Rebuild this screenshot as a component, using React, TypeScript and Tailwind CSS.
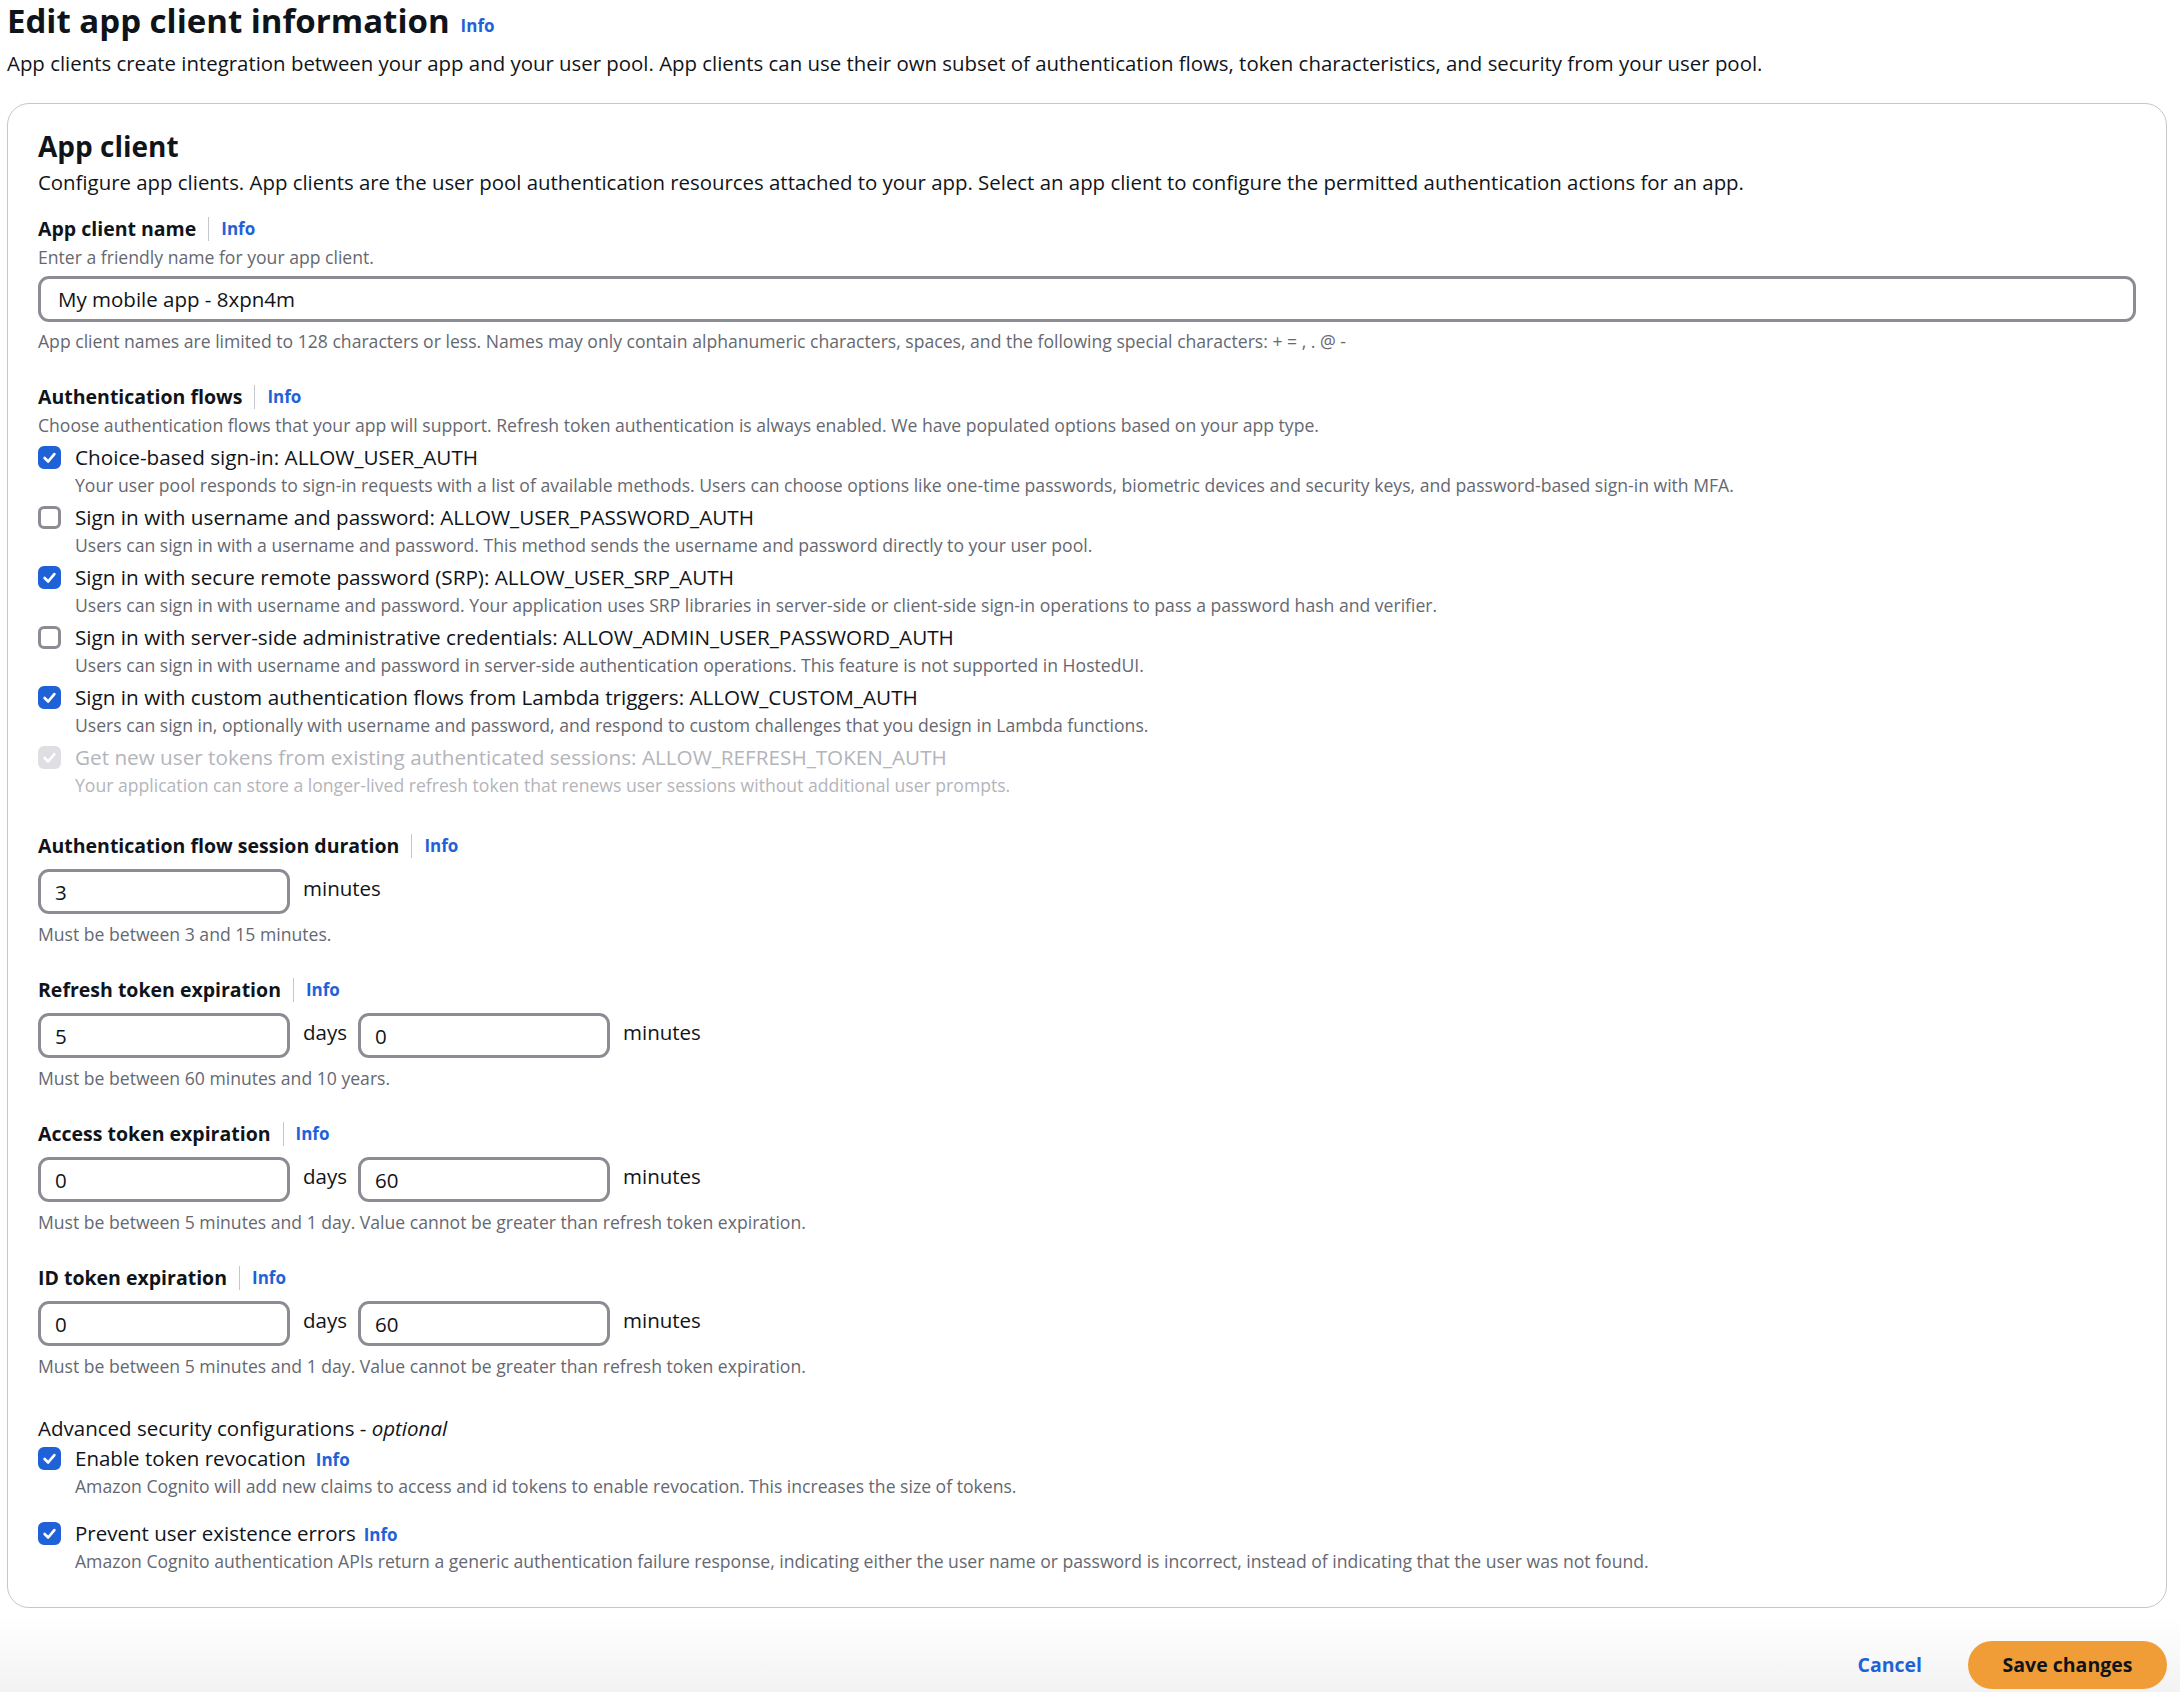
import React from "react";

const font = { fontFamily: '"Open Sans", "Liberation Sans", Arial, sans-serif' };

const InfoLink = ({ divider = true }: { divider?: boolean }) => (
  <span className="inline-flex items-center">
    {divider && <span className="mx-[12px] inline-block h-[24px] w-px bg-[#c6c6cd]" />}
    <span className="text-[17px] font-bold text-[#1f62d8]">Info</span>
  </span>
);

const Check = ({ checked, disabled }: { checked: boolean; disabled?: boolean }) => {
  const box = disabled
    ? "bg-[#dedee3] border-[#dedee3]"
    : checked
      ? "bg-[#1f62d8] border-[#1f62d8]"
      : "bg-white border-[#8c8c94]";
  return (
    <span
      className={`mt-[3px] flex h-[23px] w-[23px] shrink-0 items-center justify-center rounded-[6px] border-[3px] ${box}`}
    >
      {checked && (
        <svg viewBox="0 0 14 14" className="h-[17px] w-[17px]" fill="none">
          <path d="M3 7.4 L5.9 10.3 L11 4.2" stroke="white" strokeWidth="2.2" strokeLinecap="round" strokeLinejoin="round" />
        </svg>
      )}
    </span>
  );
};

type Flow = { label: string; desc: string; checked: boolean; disabled?: boolean };

const flows: Flow[] = [
  {
    label: "Choice-based sign-in: ALLOW_USER_AUTH",
    desc: "Your user pool responds to sign-in requests with a list of available methods. Users can choose options like one-time passwords, biometric devices and security keys, and password-based sign-in with MFA.",
    checked: true,
  },
  {
    label: "Sign in with username and password: ALLOW_USER_PASSWORD_AUTH",
    desc: "Users can sign in with a username and password. This method sends the username and password directly to your user pool.",
    checked: false,
  },
  {
    label: "Sign in with secure remote password (SRP): ALLOW_USER_SRP_AUTH",
    desc: "Users can sign in with username and password. Your application uses SRP libraries in server-side or client-side sign-in operations to pass a password hash and verifier.",
    checked: true,
  },
  {
    label: "Sign in with server-side administrative credentials: ALLOW_ADMIN_USER_PASSWORD_AUTH",
    desc: "Users can sign in with username and password in server-side authentication operations. This feature is not supported in HostedUI.",
    checked: false,
  },
  {
    label: "Sign in with custom authentication flows from Lambda triggers: ALLOW_CUSTOM_AUTH",
    desc: "Users can sign in, optionally with username and password, and respond to custom challenges that you design in Lambda functions.",
    checked: true,
  },
  {
    label: "Get new user tokens from existing authenticated sessions: ALLOW_REFRESH_TOKEN_AUTH",
    desc: "Your application can store a longer-lived refresh token that renews user sessions without additional user prompts.",
    checked: true,
    disabled: true,
  },
];

const FieldLabel = ({ children }: { children: React.ReactNode }) => (
  <div className="flex h-[28px] items-center">
    <span className="text-[19.5px] font-bold text-[#0f141a]">{children}</span>
    <InfoLink />
  </div>
);

const Hint = ({ children, className = "" }: { children: React.ReactNode; className?: string }) => (
  <div className={`text-[17.6px] leading-[22px] text-[#656871] ${className}`}>{children}</div>
);

const NumInput = ({ value }: { value: string }) => (
  <input
    defaultValue={value}
    className="h-[45px] w-[252px] rounded-[11px] border-[3px] border-[#8c8c94] bg-white px-[14px] text-[20.5px] text-[#0f141a] outline-none"
  />
);

const Unit = ({ children }: { children: React.ReactNode }) => (
  <span className="ml-[13px] mr-[11px] pt-[5px] text-[20.5px] leading-[28px] text-[#0f141a]">{children}</span>
);

const Expiration = ({
  label,
  days,
  minutes,
  hint,
  className = "",
}: {
  label: string;
  days?: string;
  minutes: string;
  hint: string;
  className?: string;
}) => (
  <div className={className}>
    <FieldLabel>{label}</FieldLabel>
    <div className="mt-[9px] flex items-start">
      {days !== undefined ? (
        <>
          <NumInput value={days} />
          <Unit>days</Unit>
          <NumInput value={minutes} />
          <Unit>minutes</Unit>
        </>
      ) : (
        <>
          <NumInput value={minutes} />
          <Unit>minutes</Unit>
        </>
      )}
    </div>
    <Hint className="mt-[9px]">{hint}</Hint>
  </div>
);

export default function App() {
  return (
    <div style={font} className="min-h-[1692px] w-full bg-white text-[#0f141a]">
      <div className="pl-[7px]">
        <div className="flex h-[42px] items-end">
          <h1 className="text-[33px] font-bold leading-[42px]">Edit app client information</h1>
          <span className="mb-[4px] ml-[11px] text-[17px] font-bold text-[#1f62d8]">Info</span>
        </div>
        <p className="mt-[7px] text-[20.4px] leading-[28px]">
          App clients create integration between your app and your user pool. App clients can use their own subset of
          authentication flows, token characteristics, and security from your user pool.
        </p>
      </div>

      <div className="ml-[7px] mr-[13px] mt-[26px] rounded-[22px] border border-[#c6c6cd] px-[30px] pb-[35px] pt-[25px]">
        <h2 className="text-[28px] font-bold leading-[34px]">App client</h2>
        <p className="mt-[5px] text-[20.4px] leading-[28px]">
          Configure app clients. App clients are the user pool authentication resources attached to your app. Select an
          app client to configure the permitted authentication actions for an app.
        </p>

        <div className="mt-[19px]">
          <FieldLabel>App client name</FieldLabel>
          <Hint className="mt-[3px]">Enter a friendly name for your app client.</Hint>
          <input
            defaultValue="My mobile app - 8xpn4m"
            className="mt-[8px] h-[46px] w-full rounded-[11px] border-[3px] border-[#8c8c94] bg-white px-[17px] text-[20.5px] text-[#0f141a] outline-none"
          />
          <Hint className="mt-[8px]">
            App client names are limited to 128 characters or less. Names may only contain alphanumeric characters,
            spaces, and the following special characters: + = , . @ -
          </Hint>
        </div>

        <div className="mt-[31px]">
          <FieldLabel>Authentication flows</FieldLabel>
          <Hint className="mt-[3px]">
            Choose authentication flows that your app will support. Refresh token authentication is always enabled. We
            have populated options based on your app type.
          </Hint>
          <div className="mt-[7px] flex flex-col gap-[7px]">
            {flows.map((f) => (
              <div key={f.label} className="flex gap-[14px]">
                <Check checked={f.checked} disabled={f.disabled} />
                <div>
                  <div
                    className={`text-[20.7px] leading-[28px] ${f.disabled ? "text-[#b4b4bb]" : "text-[#0f141a]"}`}
                  >
                    {f.label}
                  </div>
                  <Hint className={`mt-[3px] ${f.disabled ? "!text-[#b4b4bb]" : ""}`}>{f.desc}</Hint>
                </div>
              </div>
            ))}
          </div>
        </div>

        <Expiration
          className="mt-[36px]"
          label="Authentication flow session duration"
          minutes="3"
          hint="Must be between 3 and 15 minutes."
        />
        <Expiration
          className="mt-[31px]"
          label="Refresh token expiration"
          days="5"
          minutes="0"
          hint="Must be between 60 minutes and 10 years."
        />
        <Expiration
          className="mt-[31px]"
          label="Access token expiration"
          days="0"
          minutes="60"
          hint="Must be between 5 minutes and 1 day. Value cannot be greater than refresh token expiration."
        />
        <Expiration
          className="mt-[31px]"
          label="ID token expiration"
          days="0"
          minutes="60"
          hint="Must be between 5 minutes and 1 day. Value cannot be greater than refresh token expiration."
        />

        <div className="mt-[37px]">
          <div className="text-[20.5px] leading-[28px]">
            Advanced security configurations - <i>optional</i>
          </div>
          <div className="mt-[2px] flex gap-[14px]">
            <Check checked />
            <div>
              <div className="flex h-[28px] items-center text-[20.5px]">
                Enable token revocation
                <span className="ml-[10px]">
                  <InfoLink divider={false} />
                </span>
              </div>
              <Hint className="mt-[3px]">
                Amazon Cognito will add new claims to access and id tokens to enable revocation. This increases the size
                of tokens.
              </Hint>
            </div>
          </div>
          <div className="mt-[22px] flex gap-[14px]">
            <Check checked />
            <div>
              <div className="flex h-[28px] items-center text-[20.5px]">
                Prevent user existence errors
                <span className="ml-[8px]">
                  <InfoLink divider={false} />
                </span>
              </div>
              <Hint className="mt-[3px]">
                Amazon Cognito authentication APIs return a generic authentication failure response, indicating either
                the user name or password is incorrect, instead of indicating that the user was not found.
              </Hint>
            </div>
          </div>
        </div>
      </div>

      <div className="mt-[8px] flex h-[84px] items-center justify-end gap-[46px] bg-gradient-to-b from-white to-[#f1f1f2] pb-[0px] pr-[13px] pt-[14px]">
        <span className="text-[19.5px] font-bold text-[#1f62d8]">Cancel</span>
        <button className="h-[48px] w-[199px] rounded-full bg-[#f09d38] text-[19.5px] font-bold text-[#0f141a]">
          Save changes
        </button>
      </div>
    </div>
  );
}
